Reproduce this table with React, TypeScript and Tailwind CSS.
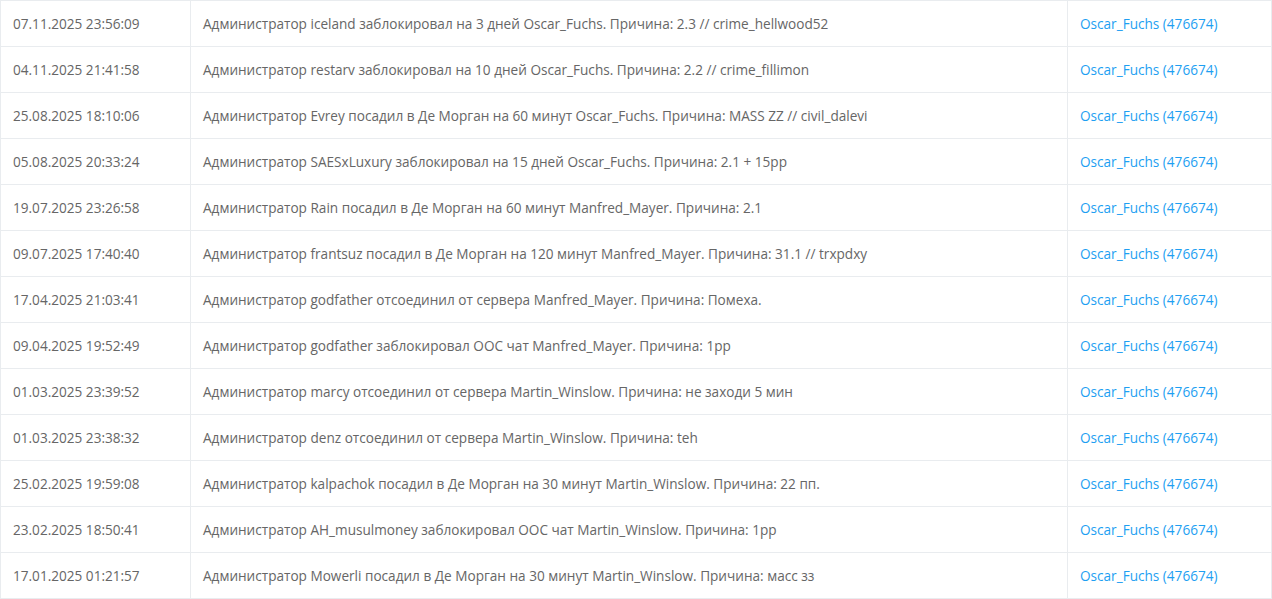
const rows: [string, string][] = [
  ["07.11.2025 23:56:09", "Администратор iceland заблокировал на 3 дней Oscar_Fuchs. Причина: 2.3 // crime_hellwood52"],
  ["04.11.2025 21:41:58", "Администратор restarv заблокировал на 10 дней Oscar_Fuchs. Причина: 2.2 // crime_fillimon"],
  ["25.08.2025 18:10:06", "Администратор Evrey посадил в Де Морган на 60 минут Oscar_Fuchs. Причина: MASS ZZ // civil_dalevi"],
  ["05.08.2025 20:33:24", "Администратор SAESxLuxury заблокировал на 15 дней Oscar_Fuchs. Причина: 2.1 + 15pp"],
  ["19.07.2025 23:26:58", "Администратор Rain посадил в Де Морган на 60 минут Manfred_Mayer. Причина: 2.1"],
  ["09.07.2025 17:40:40", "Администратор frantsuz посадил в Де Морган на 120 минут Manfred_Mayer. Причина: 31.1 // trxpdxy"],
  ["17.04.2025 21:03:41", "Администратор godfather отсоединил от сервера Manfred_Mayer. Причина: Помеха."],
  ["09.04.2025 19:52:49", "Администратор godfather заблокировал OOC чат Manfred_Mayer. Причина: 1pp"],
  ["01.03.2025 23:39:52", "Администратор marcy отсоединил от сервера Martin_Winslow. Причина: не заходи 5 мин"],
  ["01.03.2025 23:38:32", "Администратор denz отсоединил от сервера Martin_Winslow. Причина: teh"],
  ["25.02.2025 19:59:08", "Администратор kalpachok посадил в Де Морган на 30 минут Martin_Winslow. Причина: 22 пп."],
  ["23.02.2025 18:50:41", "Администратор AH_musulmoney заблокировал OOC чат Martin_Winslow. Причина: 1pp"],
  ["17.01.2025 01:21:57", "Администратор Mowerli посадил в Де Морган на 30 минут Martin_Winslow. Причина: масс зз"],
]

export default function App() {
  return (
    <div className="min-h-screen bg-white font-['Open_Sans',sans-serif] text-[13.6px] text-[#666]">
      <table className="w-full border-collapse">
        <tbody>
          {rows.map(([date, text], i) => (
            <tr key={i} className="h-[46px]">
              <td className="w-[190px] border border-[#e9ecef] px-3 pt-px align-middle">{date}</td>
              <td className="border border-[#e9ecef] px-3 pt-px align-middle">{text}</td>
              <td className="w-[204px] border border-[#e9ecef] px-3 pt-px align-middle">
                <a href="#" className="text-[#1e9ff2]">Oscar_Fuchs (476674)</a>
              </td>
            </tr>
          ))}
        </tbody>
      </table>
    </div>
  )
}
